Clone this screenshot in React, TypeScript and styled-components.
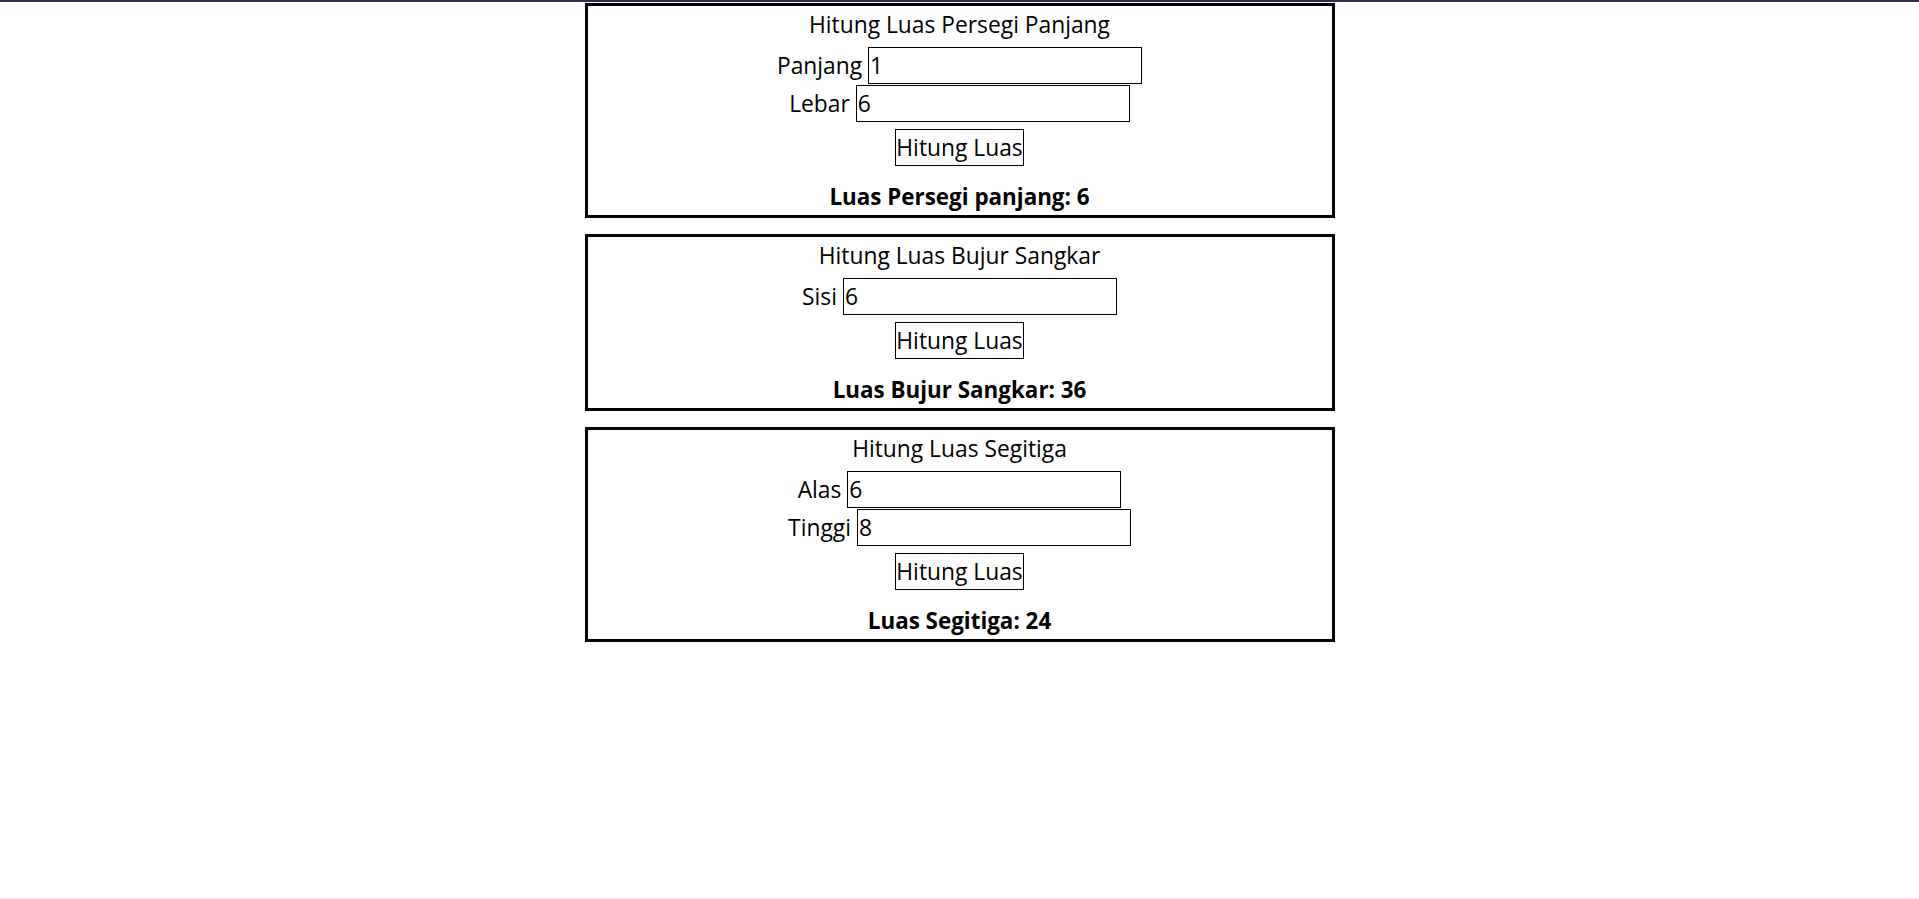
import React, {useState} from 'react';
import styled, {createGlobalStyle} from 'styled-components';

const GlobalStyle = createGlobalStyle`
  html, body {
    margin: 0;
    padding: 0;
    background: #ffffff;
  }
  body {
    font-family: "Open Sans", "Noto Sans", sans-serif;
    color: #000000;
  }
`

const Page = styled.div`
  min-height: 100vh;
  box-sizing: border-box;
  border-top: 2px solid #2d2f46;
  border-bottom: 1px solid #fbeef1;
  padding-top: 1px;
  display: flex;
  flex-direction: column;
  align-items: center;
`

const Card = styled.div`
  width: 750px;
  box-sizing: border-box;
  border: 3px solid #000000;
  margin-bottom: 16px;
  padding: 3px 0 3px;
  display: flex;
  flex-direction: column;
  align-items: center;
  font-size: 22.8px;
`

const Title = styled.div`
  line-height: 31px;
  margin-bottom: 7px;
`

const FieldRow = styled.label`
  display: flex;
  align-items: baseline;
  justify-content: center;
  gap: 6px;
  margin-bottom: 1px;
  line-height: 31px;
`

const FieldInput = styled.input`
  width: 274px;
  height: 37px;
  box-sizing: border-box;
  border: 1px solid #000000;
  border-radius: 0;
  padding: 0 1px;
  margin: 0;
  font: inherit;
  color: #000000;
  background: #ffffff;
  outline: none;
`

const CalcButton = styled.button`
  margin-top: 6px;
  height: 37px;
  box-sizing: border-box;
  padding: 0;
  border: 1px solid #000000;
  border-radius: 0;
  background: #ffffff;
  color: #000000;
  font: inherit;
  cursor: pointer;
`

const Result = styled.div`
  margin-top: 15px;
  font-weight: 700;
  font-size: 22.4px;
  line-height: 31px;
`

interface Field {
  label: string;
  value: string;
}

interface CalcCardProps {
  title: string;
  fields: Field[];
  resultLabel: string;
  compute: (vals: number[]) => number;
}

function CalcCard({title, fields, resultLabel, compute}: CalcCardProps) {
  const [values, setValues] = useState(fields.map(f => f.value));
  const [result, setResult] = useState(() => compute(fields.map(f => parseFloat(f.value) || 0)));

  const handleCalc = () => {
    setResult(compute(values.map(v => parseFloat(v) || 0)));
  };

  return (
    <Card>
      <Title>{title}</Title>
      {fields.map((f, i) => (
        <FieldRow key={f.label}>
          {f.label}
          <FieldInput
            type="text"
            value={values[i]}
            onChange={(e) => {
              const next = [...values];
              next[i] = e.target.value;
              setValues(next);
            }}
          />
        </FieldRow>
      ))}
      <CalcButton onClick={handleCalc}>Hitung Luas</CalcButton>
      <Result>{resultLabel}: {result}</Result>
    </Card>
  );
}

function App() {
  return (
    <>
      <GlobalStyle/>
      <Page>
        <CalcCard
          title="Hitung Luas Persegi Panjang"
          fields={[{label: 'Panjang', value: '1'}, {label: 'Lebar', value: '6'}]}
          resultLabel="Luas Persegi panjang"
          compute={([p, l]) => p * l}
        />
        <CalcCard
          title="Hitung Luas Bujur Sangkar"
          fields={[{label: 'Sisi', value: '6'}]}
          resultLabel="Luas Bujur Sangkar"
          compute={([s]) => s * s}
        />
        <CalcCard
          title="Hitung Luas Segitiga"
          fields={[{label: 'Alas', value: '6'}, {label: 'Tinggi', value: '8'}]}
          resultLabel="Luas Segitiga"
          compute={([a, t]) => (a * t) / 2}
        />
      </Page>
    </>
  );
}

export default App;
